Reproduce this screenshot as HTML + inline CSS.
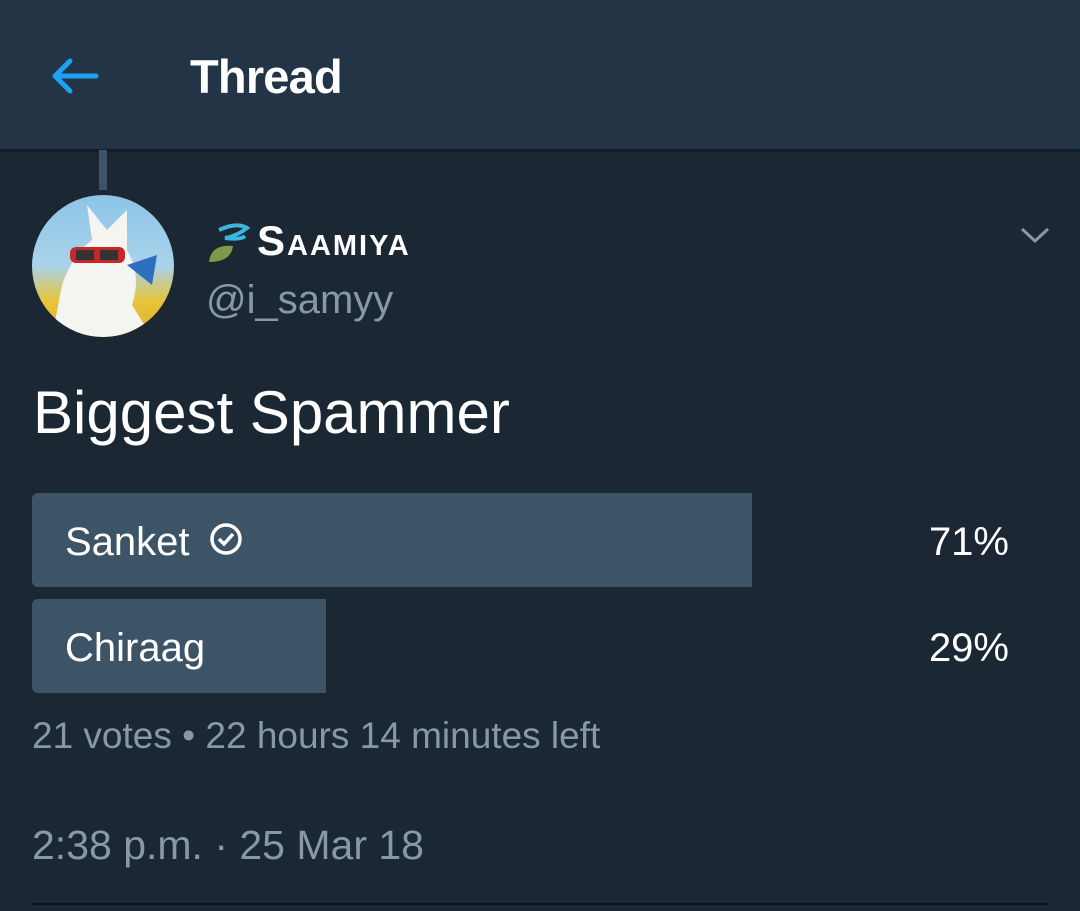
<!DOCTYPE html>
<html><head><meta charset="utf-8"><style>
*{margin:0;padding:0;box-sizing:border-box}
body{width:1080px;height:911px;background:#1b2733;font-family:"Liberation Sans",sans-serif;position:relative;overflow:hidden;color:#fff}
.hdr{position:absolute;left:0;top:0;width:1080px;height:149px;background:#243447;box-shadow:0 2px 3px rgba(0,0,0,.4)}
.t{position:absolute;left:190px;top:49px;font-size:47px;font-weight:bold;letter-spacing:-0.8px}
.line{position:absolute;left:99px;top:150px;width:8px;height:40px;background:#3d5466}
.av{position:absolute;left:32px;top:195px;width:142px;height:142px;border-radius:50%;overflow:hidden;background:linear-gradient(180deg,#8cc4e6 0%,#a9d3ea 50%,#e8c43a 75%,#e0b02c 100%)}
.name{position:absolute;left:257px;top:217px;font-size:42px;font-weight:bold;font-variant:small-caps;letter-spacing:2px}
.handle{position:absolute;left:206px;top:278px;font-size:40px;color:#8899a6}
.q{position:absolute;left:33px;top:378px;font-size:60px}
.bar{position:absolute;left:32px;background:#3d5466;border-radius:6px 0 0 6px}
.opt{position:absolute;left:65px;font-size:40px}
.pct{position:absolute;right:71px;font-size:40px}
.meta{position:absolute;left:32px;top:715px;font-size:37px;color:#8899a6}
.date{position:absolute;left:32px;top:822px;font-size:41px;color:#8899a6}
.div{position:absolute;left:32px;top:903px;width:1016px;height:2px;background:#0e141b}
</style></head><body>
<div class="hdr">
<svg style="position:absolute;left:50px;top:56px" width="50" height="40" viewBox="0 0 50 40"><path d="M46 20H6M20 5L5 20l15 15" fill="none" stroke="#1da1f2" stroke-width="5" stroke-linecap="round" stroke-linejoin="round"/></svg>
<div class="t">Thread</div>
</div>
<div class="line"></div>
<div class="av">
<svg width="142" height="142" viewBox="0 0 142 142"><path d="M20 142 L30 90 Q40 60 60 45 L55 10 L75 35 L95 15 L95 55 Q110 80 100 110 L120 142Z" fill="#f4f4f0"/><path d="M95 70 L125 60 L120 90 Z" fill="#2f6fc0"/><rect x="38" y="52" width="55" height="16" rx="6" fill="#c62828"/><rect x="44" y="55" width="18" height="10" fill="#333"/><rect x="68" y="55" width="18" height="10" fill="#333"/></svg>
</div>
<svg style="position:absolute;left:207px;top:222px" width="50" height="42" viewBox="0 0 50 42"><path d="M12 8 Q30 0 40 6 Q30 14 18 16 Q34 18 38 14" fill="none" stroke="#3bb6e0" stroke-width="4"/><path d="M2 40 Q4 22 26 24 Q24 40 2 40Z" fill="#7d9a4a"/></svg>
<div class="name">Saamiya</div>
<div class="handle">@i_samyy</div>
<svg style="position:absolute;left:1020px;top:226px" width="30" height="18" viewBox="0 0 30 18"><path d="M2 3l13 12L28 3" fill="none" stroke="#8899a6" stroke-width="3"/></svg>
<div class="q">Biggest Spammer</div>
<div class="bar" style="top:493px;width:720px;height:94px"></div>
<div class="bar" style="top:599px;width:294px;height:94px"></div>
<div class="opt" style="top:520px">Sanket <svg style="vertical-align:-1px;margin-left:8px" width="34" height="34" viewBox="0 0 34 34"><circle cx="17" cy="17" r="14" fill="none" stroke="#fff" stroke-width="3.5"/><path d="M10 17l5 5 9-10" fill="none" stroke="#fff" stroke-width="3.5"/></svg></div>
<div class="pct" style="top:520px">71%</div>
<div class="opt" style="top:626px">Chiraag</div>
<div class="pct" style="top:626px">29%</div>
<div class="meta">21 votes • 22 hours 14 minutes left</div>
<div class="date">2:38 p.m. · 25 Mar 18</div>
<div class="div"></div>
</body></html>
